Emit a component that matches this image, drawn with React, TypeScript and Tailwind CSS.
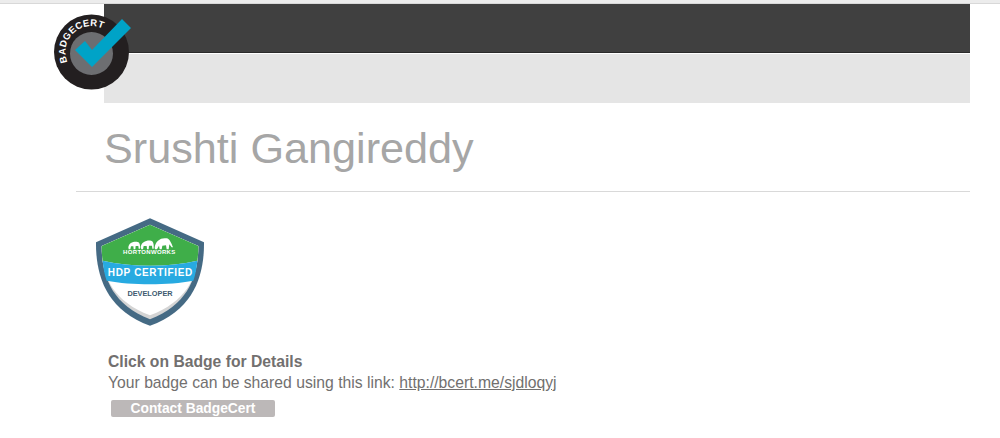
export default function App() {
  return (
    <div className="relative h-[438px] w-[1000px] overflow-hidden bg-white font-['Liberation_Sans',Arial,sans-serif]">
      <div className="h-1 bg-[#ececec] border-b border-[#d8d8d8]" />
      <div className="ml-[104px] w-[866px]">
        <div className="h-[49px] bg-[#404040] border-b border-[#2b2b2b]" />
        <div className="mt-px h-[49px] bg-[#e5e5e5]" />
      </div>
      <svg className="absolute left-[40px] top-0" width="120" height="100" viewBox="0 0 120 100">
        <circle cx="51.5" cy="52" r="37.5" fill="#231f20" />
        <circle cx="51.5" cy="53.5" r="21.5" fill="#6d6e71" />
        <defs>
          <path id="ring" d="M 27.5 62 A 26 26 0 1 1 75 63" fill="none" />
        </defs>
        <text fill="#ffffff" fontSize="9.5" fontWeight="700" letterSpacing="0.3" fontFamily="'Liberation Sans', Arial, sans-serif">
          <textPath href="#ring">BADGECERT</textPath>
        </text>
        <polygon points="35,50 45,41 52,50 82,19 91,28 52,67" fill="#00a3c7" />
      </svg>
      <h1 className="ml-[104px] mt-[20px] h-[50px] text-[43.2px] leading-[50px] font-normal text-[#a6a6a6]">Srushti Gangireddy</h1>
      <div className="ml-[76px] mt-[18px] w-[894px] border-t border-[#d9d9d9]" />
      <svg className="ml-[85px] mt-[18px] block" width="130" height="125" viewBox="0 0 390 375">
        <path d="M195 25 L357 97 C358 190 330 300 195 347 C60 300 32 190 33 97 Z" fill="#456a84" />
        <path d="M195 44 L340 108 C340 190 315 282 195 328 C75 282 50 190 50 108 Z" fill="#d4d4d4" />
        <path d="M195 44 L340 108 C340 190 315 270 195 316 C75 270 50 190 50 108 Z" fill="#ffffff" />
        <path d="M195 44 L340 108 C340 125 339 140 337 152 C250 172 140 172 53 152 C51 140 50 125 50 108 Z" fill="#3fae49" />
        <path d="M53 152 C140 172 250 172 337 152 C335 175 331 195 325 212 C250 226 140 226 65 212 C59 195 55 175 53 152 Z" fill="#27aae1" />
        <g fill="#ffffff">
          <path d="M130 112 C132 99 145 94 158 96 C164 97 166 104 165 116 L161 116 L160 108 L152 108 L151 118 L146 118 L145 109 L138 109 L136 118 L131 118 Z" />
          <path d="M167 112 C169 96 184 90 198 92 C205 93 207 102 206 116 L202 116 L201 107 L192 107 L191 118 L186 118 L185 108 L176 108 L174 118 L169 118 Z" />
          <path d="M209 113 C211 92 228 82 245 85 C254 87 258 97 264 112 L260 112 L253 103 L251 118 L245 118 L243 106 L232 107 L230 118 L224 118 L222 107 L216 118 L210 118 Z" />
        </g>
        <text x="193" y="132" textAnchor="middle" fill="#ffffff" fontSize="18" fontWeight="700" letterSpacing="1" fontFamily="'Liberation Sans', Arial, sans-serif">HORTONWORKS</text>
        <text x="196" y="199" textAnchor="middle" fill="#ffffff" fontSize="30" fontWeight="700" letterSpacing="2" fontFamily="'Liberation Sans', Arial, sans-serif">HDP CERTIFIED</text>
        <text x="195" y="257" textAnchor="middle" fill="#3d5a70" fontSize="22" fontWeight="700" fontFamily="'Liberation Sans', Arial, sans-serif">DEVELOPER</text>
      </svg>
      <div className="ml-[108px] mt-[17px] text-[#72706f]">
        <div className="text-[15.7px] leading-[20px] font-bold">Click on Badge for Details</div>
        <div className="text-[15.73px] leading-[22px]">
          Your badge can be shared using this link: <a className="underline" href="#">http://bcert.me/sjdloqyj</a>
        </div>
        <button className="ml-[3px] mt-[6px] block h-[17px] w-[164px] rounded-[2px] bg-[#bcb8b8] text-center text-[13.8px] leading-[17px] font-bold text-white">
          Contact BadgeCert
        </button>
      </div>
    </div>
  );
}
